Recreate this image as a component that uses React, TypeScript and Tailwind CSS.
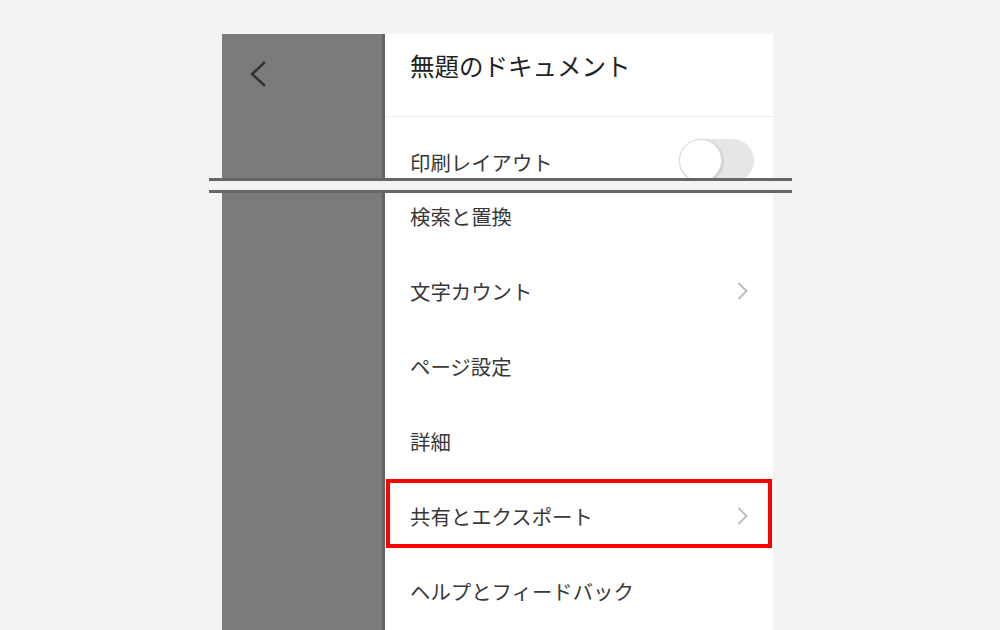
import React from "react";

const font = { fontFamily: '"Noto Sans CJK JP", "Noto Sans", sans-serif' };

function ChevronRight() {
  return (
    <svg width="14" height="20" viewBox="0 0 14 20" className="shrink-0">
      <path d="M3 2.5 L10.5 10 L3 17.5" fill="none" stroke="#bdbdbd" strokeWidth="2" strokeLinecap="round" strokeLinejoin="round" />
    </svg>
  );
}

function Row({ label, chevron, highlight }: { label: string; chevron?: boolean; highlight?: boolean }) {
  return (
    <div className="relative flex h-[75px] shrink-0 items-center justify-between pl-[25px] pr-[23px]">
      <span className="text-[20.4px] font-normal leading-[28px] text-[#383838]">{label}</span>
      {chevron && <ChevronRight />}
      {highlight && (
        <div className="pointer-events-none absolute left-[1px] right-[1px] top-[1px] bottom-[5px] border-[4px] border-[#ff0000]" />
      )}
    </div>
  );
}

export default function App() {
  return (
    <div className="h-[630px] w-[1000px] overflow-hidden bg-[#f3f3f3]" style={font}>
      <div className="ml-[222px] flex w-[551px] flex-col pt-[34px]">
        {/* top section */}
        <div className="flex h-[144px] overflow-hidden">
          <div className="w-[163px] shrink-0 border-r-[3px] border-r-[#646464] bg-[#7b7b7b] pl-[27px] pt-[27px]">
            <svg width="18" height="26" viewBox="0 0 18 26">
              <path d="M15 2 L3 13 L15 24" fill="none" stroke="#333" strokeWidth="2.6" strokeLinecap="round" strokeLinejoin="round" />
            </svg>
          </div>
          <div className="flex flex-1 flex-col bg-white">
            <div className="h-[83px] shrink-0 border-b border-b-[#ececec] pl-[25px] pt-[16px]">
              <span className="text-[24.5px] font-normal leading-[32px] text-[#222]">無題のドキュメント</span>
            </div>
            <div className="flex h-[90px] shrink-0 items-center justify-between pl-[25px] pr-[19px]">
              <span className="text-[20.4px] font-normal leading-[28px] text-[#383838]">印刷レイアウト</span>
              <div className="relative -mt-[4px] h-[43px] w-[75px] rounded-full bg-[#e6e6e6]">
                <div className="absolute left-0 top-0 h-[43px] w-[43px] rounded-full border border-[#dcdcdc] bg-white shadow-[1px_1px_3px_rgba(0,0,0,0.15)]" />
              </div>
            </div>
          </div>
        </div>
        {/* break marker */}
        <div className="-ml-[13px] -mr-[19px] flex h-[15px] flex-col">
          <div className="h-[3px] bg-[#666]" />
          <div className="h-[9px] bg-[#f3f3f3]" />
          <div className="h-[3px] bg-[#666]" />
        </div>
        {/* bottom section */}
        <div className="flex h-[437px] overflow-hidden">
          <div className="w-[163px] shrink-0 border-r-[3px] border-r-[#646464] bg-[#7b7b7b]" />
          <div className="flex flex-1 flex-col bg-white">
            <div className="-mt-[15px] flex flex-col">
              <Row label="検索と置換" />
              <Row label="文字カウント" chevron />
              <Row label="ページ設定" />
              <Row label="詳細" />
              <Row label="共有とエクスポート" chevron highlight />
              <Row label="ヘルプとフィードバック" />
            </div>
          </div>
        </div>
      </div>
    </div>
  );
}
